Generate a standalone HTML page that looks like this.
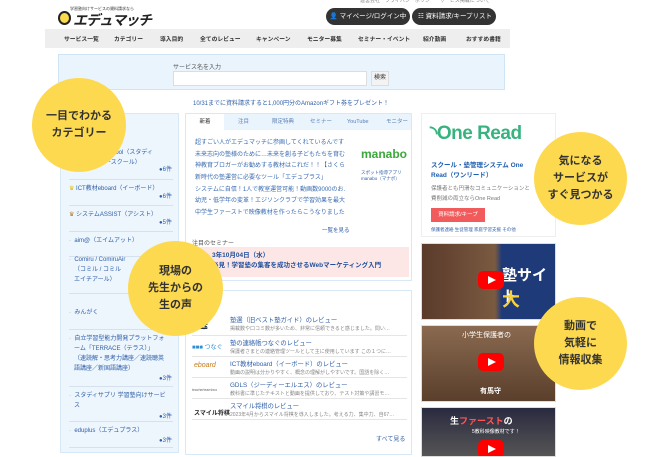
<!DOCTYPE html>
<html><head><meta charset="utf-8"><style>
*{margin:0;padding:0;box-sizing:border-box}
body{width:650px;height:450px;overflow:hidden;background:#fff;font-family:"Liberation Sans","Noto Sans CJK JP",sans-serif;position:relative;color:#333}
.a{position:absolute}
.nav span{position:absolute;top:34px;font-size:5.8px;color:#333;font-weight:bold;white-space:nowrap}
.circ{position:absolute;border-radius:50%;background:#fdd94f;display:flex;align-items:center;justify-content:center;text-align:center;font-weight:bold;color:#333;font-size:11px;line-height:17px;z-index:5}
.side{left:60px;top:113px;width:119px;height:340px;background:#edf5fd;border:1px solid #d7e8f7}
.si{position:absolute;left:8px;width:104px;font-size:6px;color:#2f5fa8;line-height:10px;white-space:nowrap}
.hr{position:absolute;left:8px;width:104px;border-top:1px solid #d5e2ee}
.cnt{position:absolute;right:6px;font-size:6px;color:#2f5fa8}
.lst div{font-size:6px;color:#3b6db3;height:11.7px;white-space:nowrap;overflow:hidden}
.rv{position:absolute;left:6px;width:215px;height:21px;border-bottom:1px solid #e5e5e5}
.rv b{position:absolute;left:38px;top:2px;font-size:6.3px;color:#2f5fa8;font-weight:normal;white-space:nowrap}
.rv i{position:absolute;left:38px;top:12px;font-size:5px;color:#888;font-style:normal;white-space:nowrap}
.vid{position:absolute;left:421px;width:135px;border:1px solid #ddd;overflow:hidden}
.play{position:absolute;left:56px;top:27px;width:26px;height:18px;background:#f00;border-radius:5px}
.play:after{content:"";position:absolute;left:10px;top:5px;border-left:8px solid #fff;border-top:4px solid transparent;border-bottom:4px solid transparent}
</style></head><body>
<div class="a" style="left:360px;top:-3px;font-size:5px;color:#888">運営会社　プライバシーポリシー　サービス掲載について</div>
<div class="a" style="left:70px;top:6px;font-size:4px;color:#333">学習塾向けサービスの資料請求なら</div>
<div class="a" style="left:58px;top:11px;width:13px;height:14px;border:2px solid #222;border-radius:50%;background:#fdd94f"></div>
<div class="a" style="left:73px;top:10px;font-size:14px;font-weight:bold;font-style:italic;color:#222;letter-spacing:-1px">エデュマッチ</div>
<div class="a" style="left:326px;top:8px;width:84px;height:17px;background:#333;border-radius:9px;color:#fff;font-size:6.5px;line-height:17px;text-align:center">👤 マイページ/ログイン中</div>
<div class="a" style="left:412px;top:8px;width:84px;height:17px;background:#333;border-radius:9px;color:#fff;font-size:6.5px;line-height:17px;padding-left:6px">☷ 資料請求/キープリスト <span style="display:inline-block;width:9px;height:9px;border-radius:50%;background:#e33;text-align:center;line-height:9px;font-size:6px">0</span></div>
<div class="a" style="left:45px;top:29px;width:465px;height:19px;background:#eee"></div>
<div class="nav"><span style="left:64px">サービス一覧</span><span style="left:114px">カテゴリー</span><span style="left:160px">導入目的</span><span style="left:200px">全てのレビュー</span><span style="left:256px">キャンペーン</span><span style="left:307px">モニター募集</span><span style="left:358px">セミナー・イベント</span><span style="left:423px">紹介動画</span><span style="left:466px">おすすめ書籍</span></div>
<div class="a" style="left:58px;top:54px;width:447px;height:36px;background:#eaf4fc;border:1px solid #cfe4f5"></div>
<div class="a" style="left:173px;top:62px;font-size:6px;color:#555">サービス名を入力</div>
<div class="a" style="left:173px;top:71px;width:194px;height:15px;background:#fff;border:1px solid #ddd"></div>
<div class="a" style="left:371px;top:71px;width:18px;height:15px;background:#f3f3f3;border:1px solid #ddd;font-size:6px;text-align:center;line-height:13px">検索</div>
<div class="a" style="left:193px;top:98px;font-size:6px;color:#2f5fa8">10/31までに資料請求すると1,000円分のAmazonギフト券をプレゼント！</div>
<!-- sidebar -->
<div class="a side">
<div class="a" style="left:30px;top:8px;font-size:7px;font-weight:bold;color:#333">ランキング</div>
<div class="si" style="top:34px;padding-left:36px">School（スタディ<br>ースクール）</div><div class="cnt" style="top:50px">●6件</div>
<div class="hr" style="top:65px"></div>
<div class="si" style="top:70px"><span style="color:#e8b800">♛</span> ICT教材eboard（イーボード）</div><div class="cnt" style="top:77px">●6件</div>
<div class="hr" style="top:91px"></div>
<div class="si" style="top:96px"><span style="color:#b0772a">♛</span> システムASSIST（アシスト）</div><div class="cnt" style="top:103px">●5件</div>
<div class="hr" style="top:117px"></div>
<div class="si" style="top:122px"><span style="color:#999">·</span>&nbsp; aim@（エイムアット）</div>
<div class="hr" style="top:142px"></div>
<div class="si" style="top:141px"><span style="color:#999">·</span>&nbsp; Comiru / ComiruAir<br>&nbsp;&nbsp;&nbsp;（コミル / コミル<br>&nbsp;&nbsp;&nbsp;エイチアール）</div>
<div class="hr" style="top:179px"></div>
<div class="si" style="top:194px"><span style="color:#999">·</span>&nbsp; みんがく</div>
<div class="hr" style="top:215px"></div>
<div class="si" style="top:220px"><span style="color:#999">·</span>&nbsp; 自立学習型能力開発プラットフォ<br>&nbsp;&nbsp;&nbsp;ーム「TERRACE（テラス）」<br>&nbsp;&nbsp;&nbsp;（速読解・思考力講座／速読聴英<br>&nbsp;&nbsp;&nbsp;語講座／新国語講座）</div><div class="cnt" style="top:259px">●3件</div>
<div class="hr" style="top:272px"></div>
<div class="si" style="top:277px"><span style="color:#999">·</span>&nbsp; スタディサプリ 学習塾向けサービ<br>&nbsp;&nbsp;&nbsp;ス</div><div class="cnt" style="top:297px">●3件</div>
<div class="hr" style="top:307px"></div>
<div class="si" style="top:312px"><span style="color:#999">·</span>&nbsp; eduplus（エデュプラス）</div><div class="cnt" style="top:321px">●3件</div>
<div class="hr" style="top:333px"></div>
</div>
<!-- middle top -->
<div class="a" style="left:185px;top:113px;width:227px;height:168px;border:1px solid #d7e8f7;background:#fff">
<div class="a" style="left:0;top:0;width:225px;height:16px;background:#eaf4fc"></div>
<div class="a" style="left:0;top:0;width:38px;height:17px;background:#fff;font-size:5.5px;text-align:center;line-height:16px">新着</div>
<div class="a" style="top:0;left:0;width:225px;font-size:5.5px;color:#5a7fb5;line-height:16px">
<span class="a" style="left:52px">注目</span><span class="a" style="left:86px">限定特典</span><span class="a" style="left:124px">セミナー</span><span class="a" style="left:161px">YouTube</span><span class="a" style="left:200px">モニター</span></div>
<div class="a lst" style="left:9px;top:23px;width:150px">
<div>超すごい人がエデュマッチに参画してくれているんです…</div><div>未来志向の塾様のために…未来を創る子どもたちを育む…</div><div>神教育ブロガーがお勧めする教材はこれだ！！【さくら…</div><div>新時代の塾運営に必要なツール「エデュプラス」</div><div>システムに自信！1人で教室運営可能！動画数9000のお…</div><div>幼児・低学年の変革！エジソンクラブで学習効果を最大化</div><div>中学生ファーストで映像教材を作ったらこうなりました…</div></div>
<div class="a" style="left:175px;top:33px;font-size:12px;color:#3aa83a;font-weight:bold">manabo</div>
<div class="a" style="left:175px;top:56px;font-size:4.5px;color:#2f5fa8;line-height:6px">スポット指導アプリ<br>manabo（マナボ）</div>
<div class="a" style="left:136px;top:112px;font-size:5.5px;color:#2f5fa8">一覧を見る</div>
<div class="a" style="left:6px;top:124px;font-size:6px;color:#555">注目のセミナー</div>
<div class="a" style="left:6px;top:133px;width:217px;height:30px;background:#fde6e6"></div>
<div class="a" style="left:26px;top:137px;font-size:6.5px;color:#1e4f9c;font-weight:bold;line-height:10px">3年10月04日（水）<br>必見！学習塾の集客を成功させるWebマーケティング入門</div>
</div>
<!-- middle bottom -->
<div class="a" style="left:185px;top:290px;width:227px;height:165px;border:1px solid #d7e8f7;background:#fff">
<div class="rv" style="top:22px;height:23px"><div class="a" style="left:2px;top:0;font-size:14px;font-weight:bold;color:#234">選</div><b>塾選（旧ベスト塾ガイド）のレビュー</b><i>掲載数や口コミ数が多いため、非常に信頼できると感じました。問い…</i></div>
<div class="rv" style="top:45px"><div class="a" style="left:0;top:6px;font-size:6px;color:#2f8fd0">■■■ つなぐ</div><b>塾の連絡帳つなぐのレビュー</b><i>保護者さまとの連絡管理ツールとして主に使用しています この１つに…</i></div>
<div class="rv" style="top:66px"><div class="a" style="left:2px;top:5px;font-size:7px;color:#c57a1a;font-style:italic">eboard</div><b>ICT教材eboard（イーボード）のレビュー</b><i>動画の説明は分かりやすく、概念の理解がしやすいです。国語を除く…</i></div>
<div class="rv" style="top:87px"><div class="a" style="left:0;top:10px;font-size:3.5px;color:#666">teacherlearnbox</div><b>GDLS（ジーディーエルエス）のレビュー</b><i>教科書に準じたテキストと動画を提供しており、テスト対策や講習モ…</i></div>
<div class="rv" style="top:108px"><div class="a" style="left:2px;top:9px;font-size:6px;font-weight:bold;color:#222">スマイル将棋</div><b>スマイル将棋のレビュー</b><i>2023年4月からスマイル将棋を導入しました。考える力、集中力、自67…</i></div>
<div class="a" style="left:190px;top:143px;font-size:6px;color:#2f5fa8">すべて見る</div>
</div>
<!-- right -->
<div class="a" style="left:421px;top:113px;width:135px;height:124px;border:1px solid #eee;background:#fff">
<div class="a" style="left:8px;top:8px;font-size:19px;font-weight:bold;color:#36b37e;letter-spacing:-0.5px">◝One Read</div>
<div class="a" style="left:9px;top:47px;font-size:6.5px;color:#1e5fb0;font-weight:bold;line-height:10px">スクール・塾管理システム One<br>Read（ワンリード）</div>
<div class="a" style="left:9px;top:70px;font-size:5.5px;color:#777;line-height:10px">保護者とも円滑なコミュニケーションと<br>費削減の両立ならOne Read</div>
<div class="a" style="left:9px;top:94px;width:54px;height:14px;background:#f25b5b;color:#fff;font-size:5.5px;line-height:14px;text-align:center">資料請求/キープ</div>
<div class="a" style="left:9px;top:113px;font-size:4.5px;color:#2f5fa8">保護者連絡 生徒管理 家庭学習支援 その他</div>
</div>
<div class="vid" style="top:243px;height:77px;background:linear-gradient(90deg,#5a3a2a 0%,#7a5a40 55%,#1e3a78 60%,#1e3a78 100%)"><div class="a" style="left:80px;top:20px;font-size:15px;color:#fff;font-weight:bold">塾サイト</div><div class="a" style="left:80px;top:42px;font-size:18px;color:#f8d23a;font-weight:bold">大</div><div class="play"></div></div>
<div class="vid" style="top:325px;height:77px;background:linear-gradient(180deg,#8a6a50,#5a3f2c)"><div class="a" style="left:40px;top:4px;font-size:7px;color:#fff">小学生保護者の</div><div class="a" style="left:58px;top:60px;font-size:7px;color:#fff;font-weight:bold">有馬守</div><div class="play"></div></div>
<div class="vid" style="top:407px;height:50px;background:linear-gradient(180deg,#2a2a40,#555)"><div class="a" style="left:28px;top:6px;font-size:9px;color:#fff;font-weight:bold">生<span style="color:#f55">ファースト</span>の</div><div class="a" style="left:50px;top:20px;font-size:5px;color:#fff">5教科映像教材です！</div><div class="play" style="top:32px"></div></div>
<div class="circ" style="left:32px;top:78px;width:94px;height:94px">一目でわかる<br>カテゴリー</div>
<div class="circ" style="left:128px;top:241px;width:95px;height:95px">現場の<br>先生からの<br>生の声</div>
<div class="circ" style="left:534px;top:132px;width:93px;height:93px">気になる<br>サービスが<br>すぐ見つかる</div>
<div class="circ" style="left:534px;top:297px;width:93px;height:93px">動画で<br>気軽に<br>情報収集</div>
</body></html>
